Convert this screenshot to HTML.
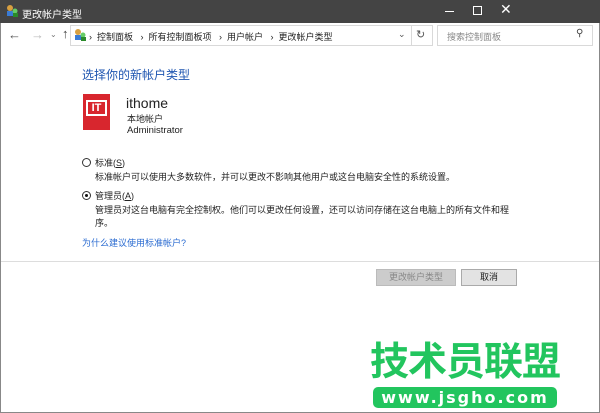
<!DOCTYPE html><html><head><meta charset="utf-8"><style>
*{margin:0;padding:0;box-sizing:border-box}
body{width:600px;height:413px;overflow:hidden;background:#fff;font-family:"Liberation Sans","Noto Sans CJK SC",sans-serif;font-size:9px;color:#222;position:relative}
.frame{position:absolute;left:0;top:0;width:600px;height:413px;border:1px solid #888}
.tb{position:absolute;left:0;top:0;width:600px;height:23px;background:#444;color:#fff}
.a{position:absolute;white-space:nowrap}
.box{position:absolute;border:1px solid #d9d9d9}
.blue{color:#1e55b0}
</style></head><body>
<div class="frame"></div>
<div class="tb">
<svg class="a" style="left:5px;top:4px" width="14" height="14"><circle cx="5" cy="4" r="3" fill="#d8a040"/><rect x="2" y="7" width="7" height="5" fill="#3a7bd5"/><circle cx="10" cy="7" r="2.5" fill="#6c6"/><rect x="8" y="9" width="5" height="4" fill="#2a8a2a"/></svg>
<div class="a" style="left:22px;top:6px;font-size:10px">更改帐户类型</div>
<div class="a" style="left:445px;top:11px;width:9px;height:1px;background:#fff"></div>
<div class="a" style="left:473px;top:6px;width:9px;height:9px;border:1px solid #fff"></div>
<div class="a" style="left:500px;top:1px;font-size:14px">✕</div>
</div>
<div class="a" style="left:8px;top:27px;font-size:13px;color:#555">←</div>
<div class="a" style="left:31px;top:27px;font-size:13px;color:#bbb">→</div>
<div class="a" style="left:50px;top:30px;font-size:8px;color:#777">⌄</div>
<div class="a" style="left:62px;top:26px;font-size:13px;color:#444">↑</div>
<div class="box" style="left:70px;top:25px;width:363px;height:21px"></div>
<div class="a" style="left:411px;top:25px;width:1px;height:21px;background:#d9d9d9"></div>
<svg class="a" style="left:73px;top:28px" width="14" height="14"><circle cx="5" cy="4" r="3" fill="#d8a040"/><rect x="2" y="7" width="7" height="5" fill="#3a7bd5"/><circle cx="10" cy="7" r="2.5" fill="#6c6"/><rect x="8" y="9" width="5" height="4" fill="#2a8a2a"/></svg>
<div class="a" style="left:89px;top:30px;color:#222">›&nbsp;&nbsp;控制面板&nbsp;&nbsp;&nbsp;›&nbsp;&nbsp;所有控制面板项&nbsp;&nbsp;&nbsp;›&nbsp;&nbsp;用户帐户&nbsp;&nbsp;&nbsp;›&nbsp;&nbsp;更改帐户类型</div>
<div class="a" style="left:398px;top:29px;color:#555">⌄</div>
<div class="a" style="left:416px;top:28px;font-size:11px;color:#555">↻</div>
<div class="box" style="left:437px;top:25px;width:156px;height:21px"></div>
<div class="a" style="left:447px;top:30px;color:#888">搜索控制面板</div>
<div class="a" style="left:576px;top:28px;font-size:10px;color:#444">⚲</div>
<div class="a blue" style="left:82px;top:66px;font-size:12px">选择你的新帐户类型</div>
<div class="a" style="left:83px;top:94px;width:27px;height:36px;background:#d8262e"></div>
<div class="a" style="left:86px;top:100px;width:21px;height:16px;border:2px solid #fff;color:#fff;font-weight:bold;font-size:11px;line-height:12px;text-align:center">IT</div>
<div class="a" style="left:126px;top:95px;font-size:14px">ithome</div>
<div class="a" style="left:127px;top:112px">本地帐户</div>
<div class="a" style="left:127px;top:125px;font-size:9.5px">Administrator</div>
<div class="a" style="left:82px;top:158px;width:9px;height:9px;border:1px solid #333;border-radius:50%"></div>
<div class="a" style="left:95px;top:156px">标准(<u>S</u>)</div>
<div class="a" style="left:95px;top:170px">标准帐户可以使用大多数软件，并可以更改不影响其他用户或这台电脑安全性的系统设置。</div>
<div class="a" style="left:82px;top:191px;width:9px;height:9px;border:1px solid #333;border-radius:50%"><div style="margin:2px;width:3px;height:3px;background:#111;border-radius:50%"></div></div>
<div class="a" style="left:95px;top:189px">管理员(<u>A</u>)</div>
<div class="a" style="left:95px;top:203px">管理员对这台电脑有完全控制权。他们可以更改任何设置，还可以访问存储在这台电脑上的所有文件和程</div>
<div class="a" style="left:95px;top:216px">序。</div>
<div class="a blue" style="left:82px;top:236px;color:#2a6bd1">为什么建议使用标准帐户?</div>
<div class="a" style="left:1px;top:261px;width:598px;height:1px;background:#ddd"></div>
<div class="a" style="left:376px;top:269px;width:80px;height:17px;background:#ccc;border:1px solid #bbb;color:#888;text-align:center;line-height:15px">更改帐户类型</div>
<div class="a" style="left:461px;top:269px;width:56px;height:17px;background:#e3e3e3;border:1px solid #aaa;text-align:center;line-height:15px">取消</div>
<div class="a" style="left:370px;top:340px;font-size:39px;font-weight:bold;color:#22c55e;letter-spacing:-1px;line-height:46px">技术员联盟</div>
<div class="a" style="left:373px;top:387px;width:184px;height:21px;background:#22c55e;border-radius:5px;color:#fff;font-weight:bold;font-size:16px;text-align:center;line-height:21px;letter-spacing:2px;font-family:'DejaVu Sans',sans-serif">www.jsgho.com</div>
</body></html>
